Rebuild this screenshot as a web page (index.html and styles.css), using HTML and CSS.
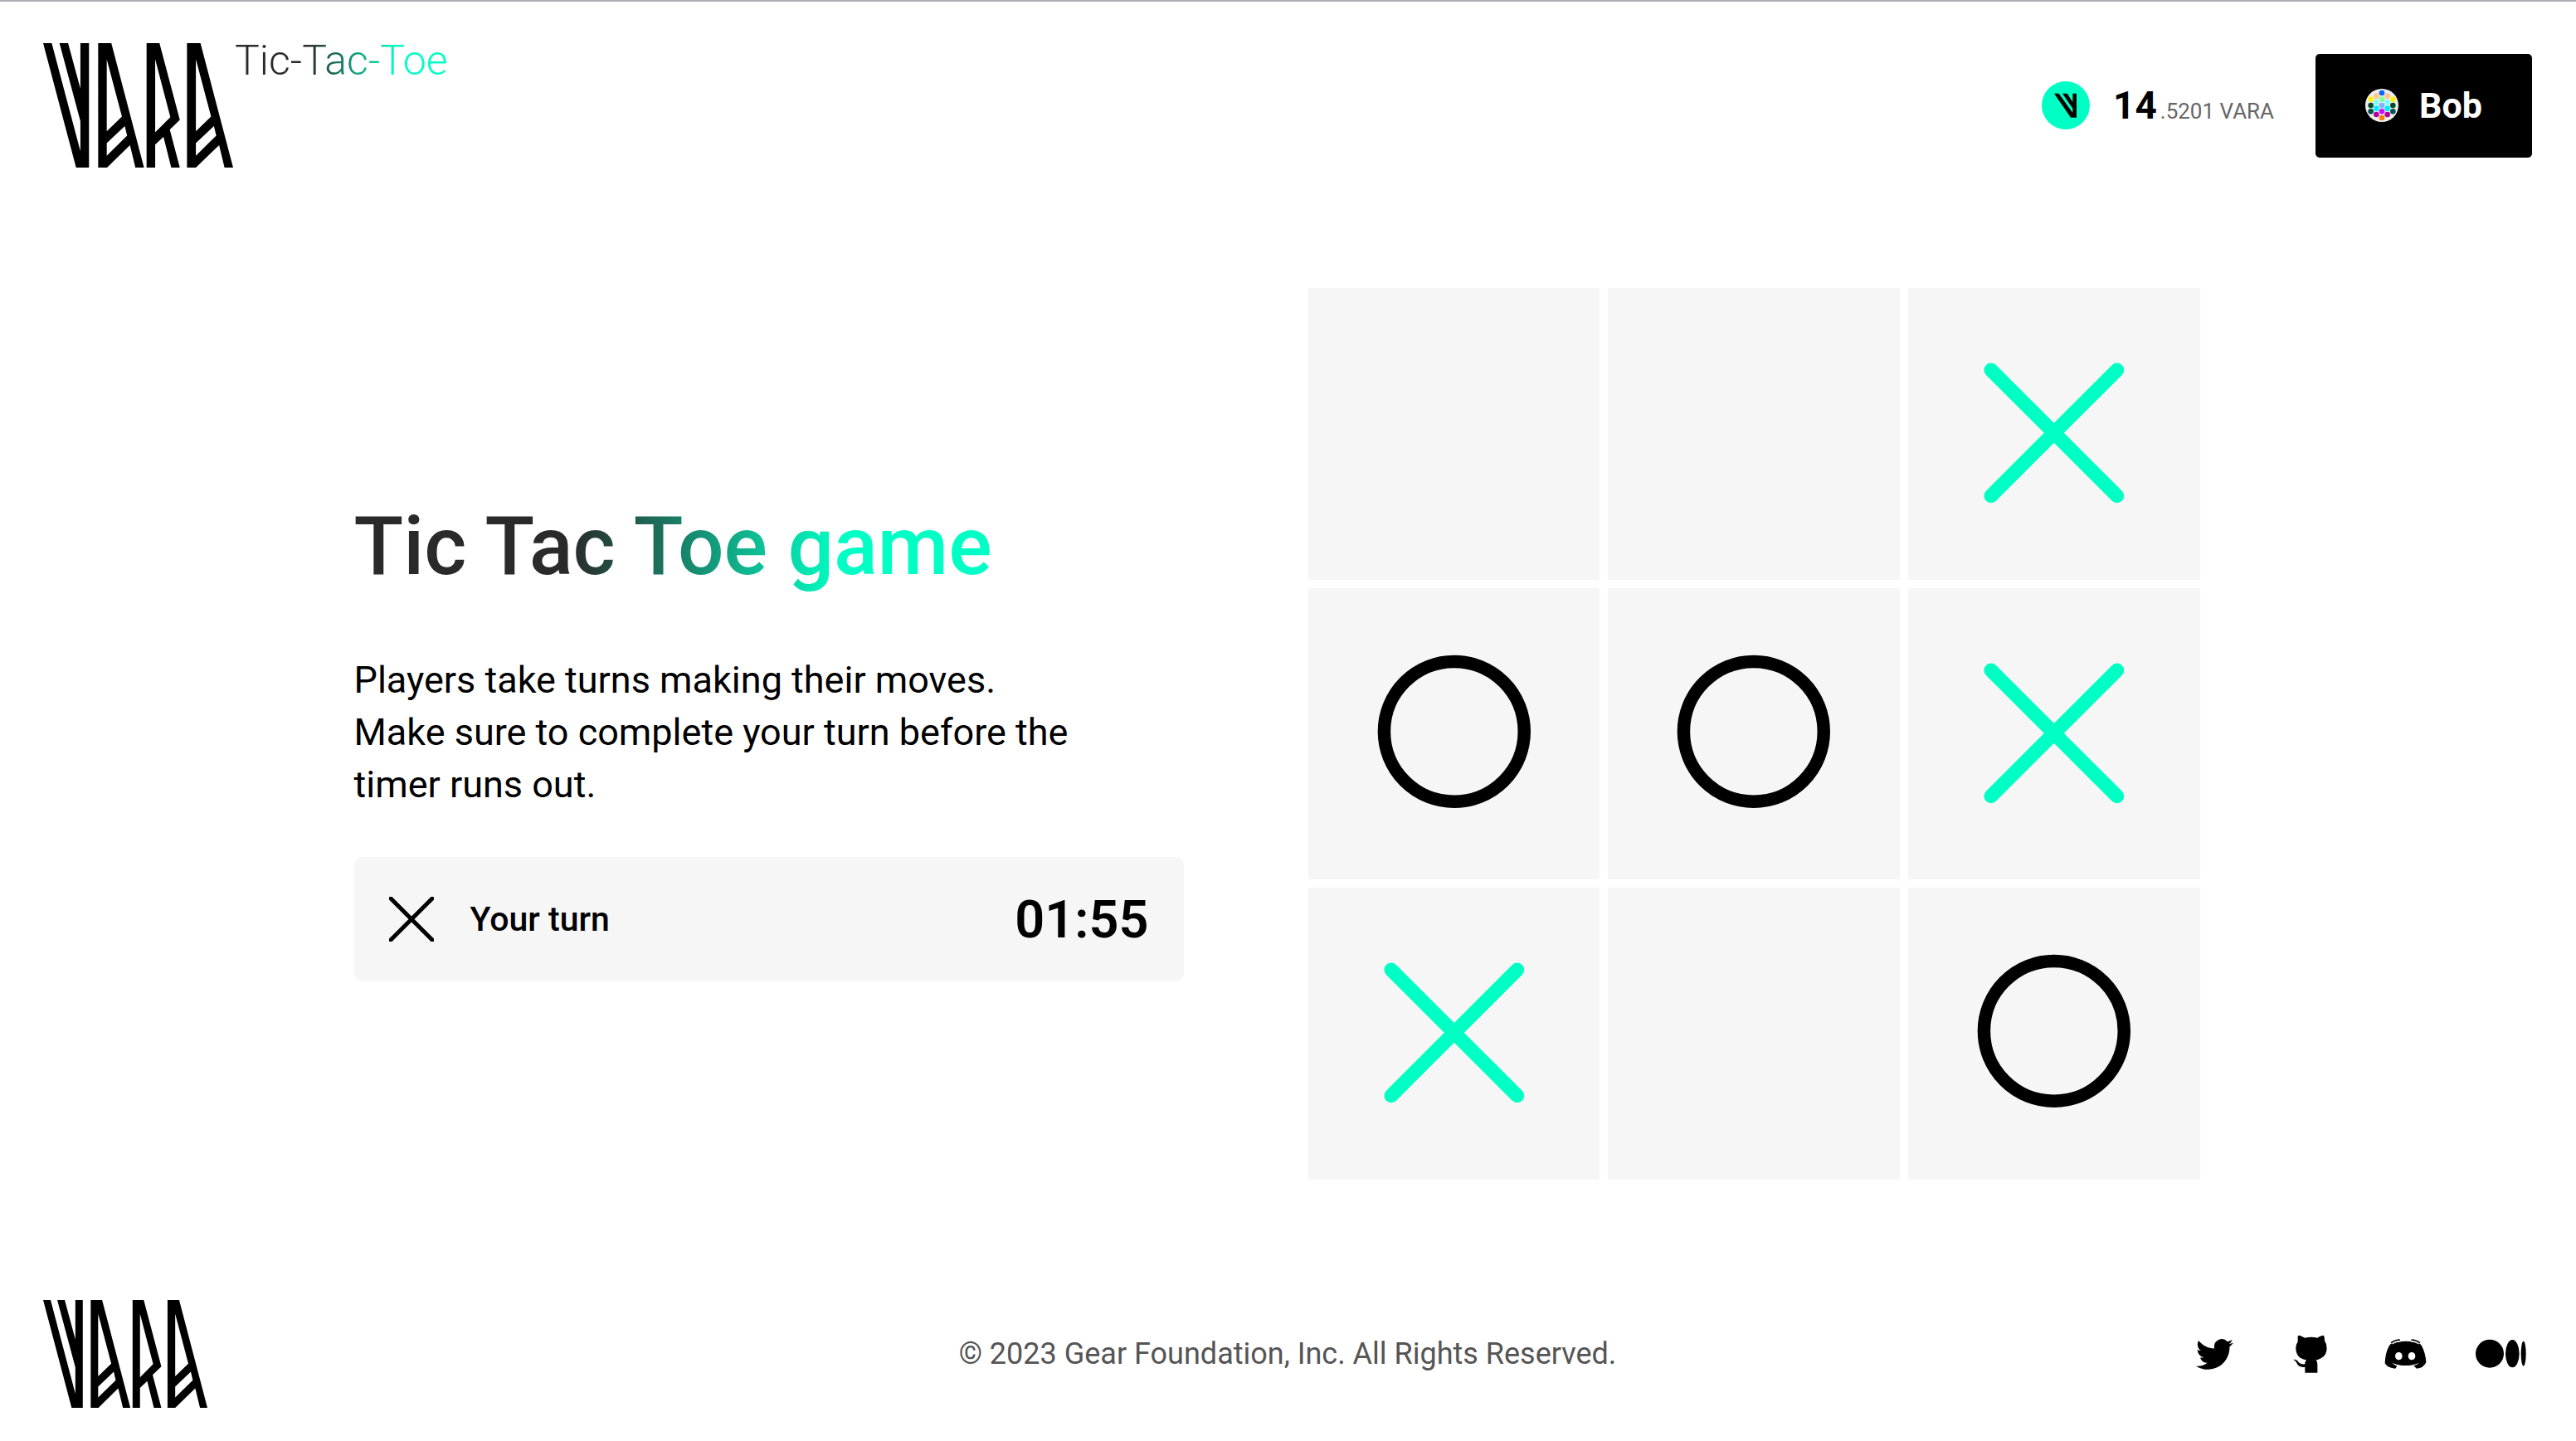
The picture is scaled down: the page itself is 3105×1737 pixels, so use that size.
FILE: index.html
```
<!DOCTYPE html>
<html lang="en">
<head>
<meta charset="utf-8">
<title>Tic-Tac-Toe</title>
<link rel="stylesheet" href="styles.css">
</head>
<body>
<svg class="defs" aria-hidden="true">
  <symbol id="vara" viewBox="0 0 663 449" preserveAspectRatio="none">
    <path fill-rule="evenodd" d="M0 0H30L130 390V281L57 0H87L130 164V0H160V449H115Z M192 0H238L352 449H322L303 368L223 449H192Z M222 58L275 265L222 318Z M285 299L293 334L222 406V361Z M361 0H406L477 277L442 312L477 449H447L420 338L391 366V449H361Z M391 58L444 267L391 322Z M502 0H549L663 449H633L614 368L533 449H502Z M533 58L586 265L533 318Z M596 299L604 334L533 406V361Z"/>
  </symbol>
  <symbol id="cross" viewBox="0 0 352 352">
    <path d="M100 99L252 251M252 99L100 251" fill="none" stroke="#00ffc4" stroke-width="17" stroke-linecap="round"/>
  </symbol>
  <symbol id="nought" viewBox="0 0 352 352">
    <circle cx="176" cy="173" r="84.5" fill="none" stroke="#000" stroke-width="15.5"/>
  </symbol>
</svg>

<header class="header">
  <a class="brand" href="#" aria-label="Vara Tic-Tac-Toe">
    <svg class="brand-logo"><use href="#vara"/></svg>
    <span class="brand-name gradient">Tic-Tac-Toe</span>
  </a>
  <div class="account">
    <div class="balance">
      <svg class="coin" viewBox="0 0 174 174" aria-hidden="true">
        <circle cx="87" cy="87" r="87" fill="#00ffc4"/>
        <path d="M45 44H62L112 114V98L75 44H92L112 75V44H126V131H105Z"/>
      </svg>
      <p class="amount"><b>14</b><span class="fraction">.5201 VARA</span></p>
    </div>
    <button class="user" type="button">
      <svg class="avatar" viewBox="0 0 120 120" aria-hidden="true">
        <circle cx="60" cy="60" r="60" fill="#eee"/>
        <circle cx="60" cy="15" r="10" fill="#0d66ff"/>
        <g fill="#ffc78a"><circle cx="40" cy="26" r="10"/><circle cx="80" cy="26" r="10"/></g>
        <g fill="#fff01a"><circle cx="20" cy="38" r="10"/><circle cx="100" cy="38" r="10"/></g>
        <circle cx="60" cy="38" r="10" fill="#87ff9f"/>
        <g fill="#80ffff"><circle cx="40" cy="49" r="10"/><circle cx="80" cy="49" r="10"/></g>
        <g fill="#044d26"><circle cx="20" cy="60" r="10"/><circle cx="100" cy="60" r="10"/></g>
        <circle cx="60" cy="60" r="10" fill="#80b3ff"/>
        <g fill="#00eeff"><circle cx="40" cy="71" r="10"/><circle cx="80" cy="71" r="10"/></g>
        <g fill="#05524f"><circle cx="20" cy="82" r="10"/><circle cx="100" cy="82" r="10"/></g>
        <circle cx="60" cy="82" r="10" fill="#c512ff"/>
        <g fill="#b000a0"><circle cx="40" cy="93" r="10"/><circle cx="80" cy="93" r="10"/></g>
        <circle cx="60" cy="105" r="10" fill="#ff7f0e"/>
      </svg>
      Bob
    </button>
  </div>
</header>

<main class="main">
  <section class="info">
    <h1 class="title gradient">Tic Tac Toe game</h1>
    <p class="text">Players take turns making their moves.<br>Make sure to complete your turn before the timer runs out.</p>
    <div class="status">
      <svg class="status-icon" viewBox="0 0 54 54" aria-hidden="true"><path d="M2 2L52 52M52 2L2 52" stroke="#000" stroke-width="5" stroke-linecap="round"/></svg>
      <span class="turn">Your turn</span>
      <time class="timer">01:55</time>
    </div>
  </section>
  <section class="board" aria-label="Board">
    <button class="cell" type="button" aria-label="Empty"></button>
    <button class="cell" type="button" aria-label="Empty"></button>
    <button class="cell" type="button" aria-label="Cross"><svg class="mark"><use href="#cross"/></svg></button>
    <button class="cell" type="button" aria-label="Nought"><svg class="mark"><use href="#nought"/></svg></button>
    <button class="cell" type="button" aria-label="Nought"><svg class="mark"><use href="#nought"/></svg></button>
    <button class="cell" type="button" aria-label="Cross"><svg class="mark"><use href="#cross"/></svg></button>
    <button class="cell" type="button" aria-label="Cross"><svg class="mark"><use href="#cross"/></svg></button>
    <button class="cell" type="button" aria-label="Empty"></button>
    <button class="cell" type="button" aria-label="Nought"><svg class="mark"><use href="#nought"/></svg></button>
  </section>
</main>

<footer class="footer">
  <a class="footer-brand" href="#" aria-label="Vara"><svg class="footer-logo"><use href="#vara"/></svg></a>
  <p class="copyright">© 2023 Gear Foundation, Inc. All Rights Reserved.</p>
  <nav class="social" aria-label="Social">
    <a class="social-link" href="#" aria-label="Twitter">
      <svg width="45" height="45" viewBox="0 0 24 24"><path d="M23.953 4.57a10 10 0 01-2.825.775 4.958 4.958 0 002.163-2.723c-.951.555-2.005.959-3.127 1.184a4.92 4.92 0 00-8.384 4.482C7.69 8.095 4.067 6.13 1.64 3.162a4.822 4.822 0 00-.666 2.475c0 1.71.87 3.213 2.188 4.096a4.904 4.904 0 01-2.228-.616v.06a4.923 4.923 0 003.946 4.827 4.996 4.996 0 01-2.212.085 4.936 4.936 0 004.604 3.417 9.867 9.867 0 01-6.102 2.105c-.39 0-.779-.023-1.17-.067a13.995 13.995 0 007.557 2.209c9.053 0 13.998-7.496 13.998-13.985 0-.21 0-.42-.015-.63A9.935 9.935 0 0024 4.59z"/></svg>
    </a>
    <a class="social-link" href="#" aria-label="GitHub">
      <svg width="41" height="46" viewBox="0 0 123 138"><path d="M17 5Q19 2 22 2C30 4 37 8 43 11Q65 6 88 11Q98 3 110 2Q114 5 114 22Q124 35 121 58Q116 85 83 91Q88 97 88 110V137H43V116Q20 120 12 100Q8 93 1 90Q10 88 17 95Q25 108 43 106Q43 97 48 91Q12 86 10 52Q9 36 17 25Z"/></svg>
    </a>
    <a class="social-link" href="#" aria-label="Discord">
      <svg width="51" height="36" viewBox="0 0 153 108"><path fill-rule="evenodd" d="M28 16Q45 8 78 8Q108 8 125 16Q132 18 136 27Q150 55 151 85Q140 107 117 107L106 97Q116 95 126 86Q104 96 77 96Q50 96 28 86Q34 93 46 98L40 107Q12 106 2 88Q3 50 18 24Q22 18 28 16ZM52 48A13 14 0 1 0 52 76A13 14 0 1 0 52 48ZM99 48A13 14 0 1 0 99 76A13 14 0 1 0 99 48Z"/><path d="M24 14Q38 4 57 3M97 3Q115 4 129 14" fill="none" stroke="#000" stroke-width="4"/><path d="M28 18Q42 10 60 8M94 8Q111 10 125 18" fill="none" stroke="#fff" stroke-width="3"/></svg>
    </a>
    <a class="social-link" href="#" aria-label="Medium">
      <svg width="61" height="36" viewBox="0 0 183 108"><circle cx="51" cy="53" r="51"/><ellipse cx="133" cy="53" rx="25" ry="50"/><ellipse cx="173" cy="53" rx="9" ry="45"/></svg>
    </a>
  </nav>
</footer>
</body>
</html>
```
FILE: styles.css
```
* {
  box-sizing: border-box;
}

body {
  display: flex;
  flex-direction: column;
  min-height: 100vh;
  margin: 0;
  border-top: 2px solid #aeadb3;
  background: #fff;
  color: #000;
  font-family: Roboto, sans-serif;
}

h1,
p {
  margin: 0;
}

a {
  color: inherit;
  text-decoration: none;
}

button {
  border: 0;
  font: inherit;
  cursor: pointer;
}

svg {
  display: block;
  flex: none;
}

.defs {
  position: absolute;
  width: 0;
  height: 0;
}

.gradient {
  background: linear-gradient(92deg, #2a2a2a 34%, #00ffc4 76%);
  background-clip: text;
  -webkit-background-clip: text;
  color: transparent;
}

.header {
  display: flex;
  align-items: center;
  justify-content: space-between;
  padding: 50px 53px 50px 52px;
}

.brand {
  display: flex;
  align-items: flex-start;
  gap: 2px;
}

.brand-logo {
  width: 229px;
  height: 150px;
}

.brand-name {
  font-size: 50px;
  font-weight: 300;
  line-height: 42px;
}

.account {
  display: flex;
  align-items: center;
  gap: 50px;
}

.balance {
  display: flex;
  align-items: center;
  gap: 28px;
}

.coin {
  width: 58px;
  height: 58px;
}

.amount {
  display: flex;
  align-items: baseline;
  gap: 4px;
  font-size: 46px;
}

.fraction {
  color: #666;
  font-size: 26px;
}

.user {
  display: flex;
  align-items: center;
  gap: 25px;
  height: 125px;
  padding: 0 60px;
  border-radius: 5px;
  background: #000;
  color: #fff;
  font-size: 43px;
  font-weight: 700;
}

.avatar {
  width: 40px;
  height: 40px;
}

.main {
  display: grid;
  flex: 1;
  grid-template-columns: minmax(0, 1000px) minmax(0, 1100px);
  gap: 150px;
  align-items: center;
  justify-content: center;
  padding-right: 2px;
}

.info {
  display: flex;
  flex-direction: column;
  gap: 56px;
}

.title {
  align-self: flex-start;
  font-size: 98px;
  font-weight: 500;
  line-height: 146px;
}

.text {
  max-width: 950px;
  font-size: 45px;
  line-height: 63px;
}

.status {
  display: flex;
  align-items: center;
  gap: 44px;
  height: 150px;
  padding: 0 42px;
  border-radius: 10px;
  background: #f6f6f6;
}

.status-icon {
  width: 54px;
  height: 54px;
}

.turn {
  font-size: 41px;
  font-weight: 500;
}

.timer {
  margin-left: auto;
  font-size: 63px;
  font-weight: 600;
}

.board {
  display: grid;
  grid-template-columns: repeat(3, 1fr);
  gap: 10px;
  max-width: 1075px;
}

.cell {
  display: flex;
  aspect-ratio: 1;
  padding: 0;
  background: #f6f6f6;
}

.mark {
  width: 100%;
  height: 100%;
}

.footer {
  display: grid;
  grid-template-columns: 1fr auto 1fr;
  align-items: center;
  padding: 50px 53px 40px 52px;
}

.footer-logo {
  width: 198px;
  height: 130px;
}

.copyright {
  color: #555;
  font-size: 36px;
}

.social {
  display: flex;
  gap: 40px;
  justify-content: flex-end;
}

.social-link {
  display: flex;
  align-items: center;
  justify-content: center;
  width: 75px;
  height: 75px;
}
```
